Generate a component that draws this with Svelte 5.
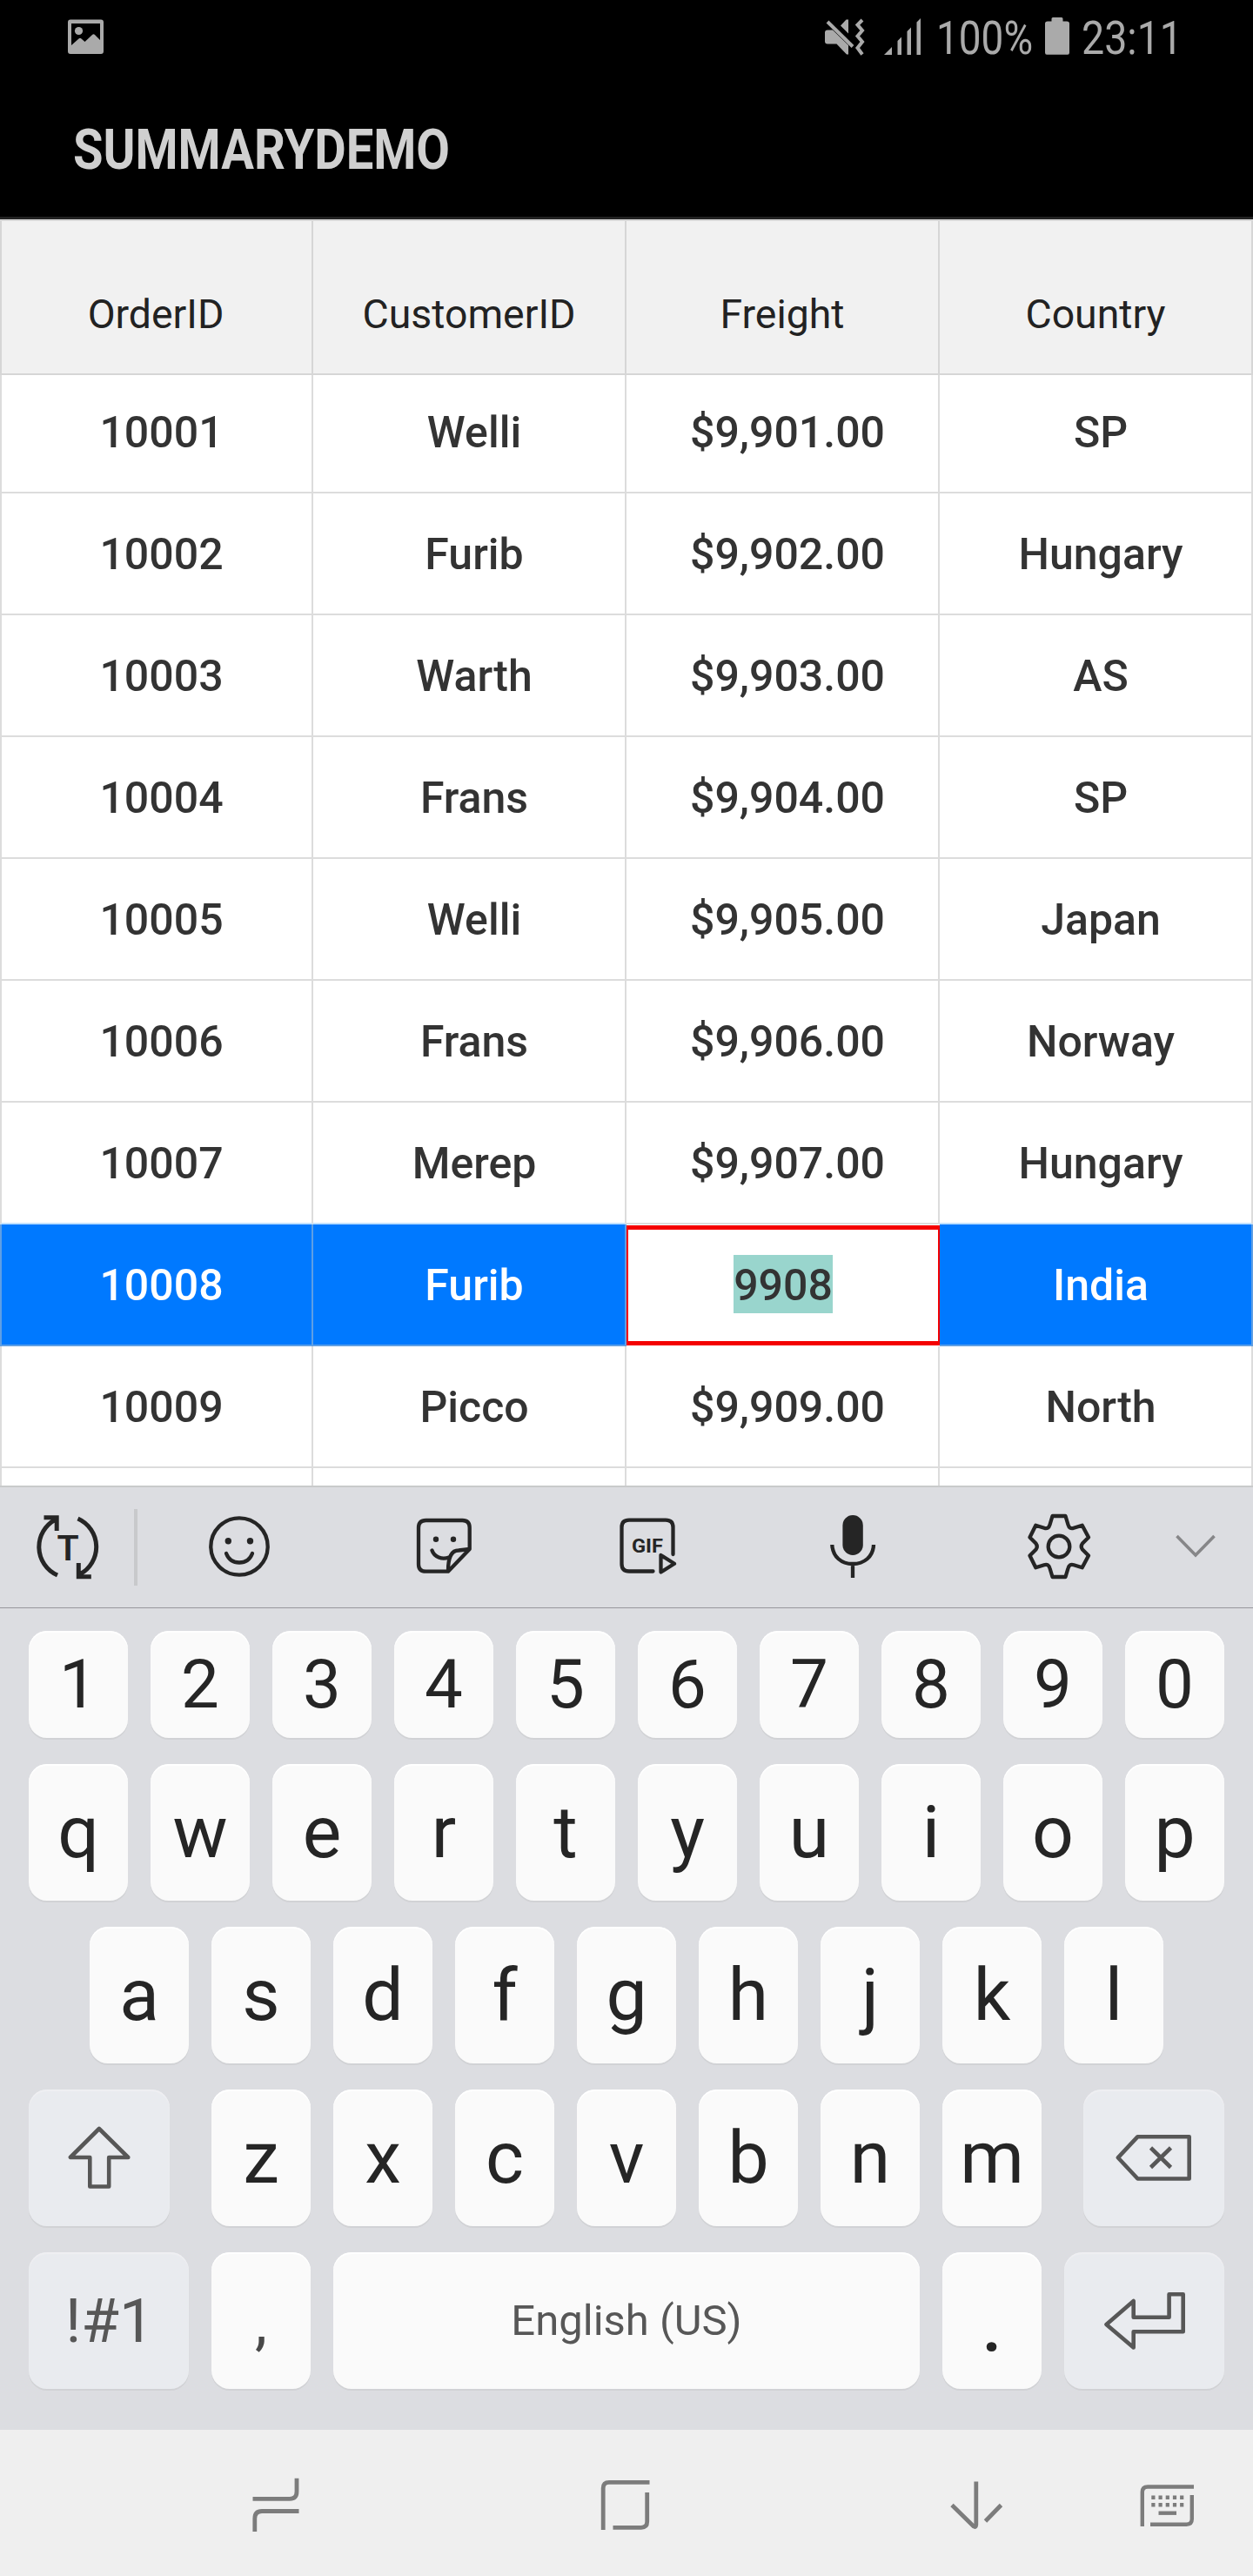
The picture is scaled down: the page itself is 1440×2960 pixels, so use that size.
<script>
  const columns = ['OrderID', 'CustomerID', 'Freight', 'Country'];
  const rows = [
    ['10001', 'Welli', '$9,901.00', 'SP'],
    ['10002', 'Furib', '$9,902.00', 'Hungary'],
    ['10003', 'Warth', '$9,903.00', 'AS'],
    ['10004', 'Frans', '$9,904.00', 'SP'],
    ['10005', 'Welli', '$9,905.00', 'Japan'],
    ['10006', 'Frans', '$9,906.00', 'Norway'],
    ['10007', 'Merep', '$9,907.00', 'Hungary'],
    ['10008', 'Furib', '9908', 'India'],
    ['10009', 'Picco', '$9,909.00', 'North'],
    ['', '', '', '']
  ];
  const selected = 7;
  const editing = 2;
</script>

<div class="screen">
  <div class="status">
    <svg class="photo" width="42" height="44" viewBox="78 20 42 44">
      <path fill-rule="evenodd" d="M81 22.500H116Q119 22.500 119 25.500V59Q119 62 116 62H81Q78 62 78 59V25.500Q78 22.500 81 22.500ZM82 27V52L90.500 44.500Q92 43 93.500 44.500L97.500 48L106 40Q107.500 38.500 109 40L115 46V27Z" />
      <ellipse cx="90.500" cy="35.500" rx="4.600" ry="4.600" />
    </svg>
    <svg width="45" height="44" viewBox="948 20 45 44">
      <path d="M951 34.500H957L975 52V62.500H973L961.500 50.500H951Q948 50.500 948 47.500V37.500Q948 34.500 951 34.500ZM975 22.500V38.500L966 29.500L972.500 22.500Z" />
      <path class="line" stroke-width="4" d="M951 25L980 53.500" />
      <path class="line" stroke-width="4" d="M991 23L985.500 28.500L991 35L985.500 41.500L991 48L985.500 55L991 62.500" />
    </svg>
    <svg class="signal" width="43" height="44" viewBox="1016 20 43 44">
      <path d="M1016 63L1025 54V63ZM1031.500 47L1036 42.500V63H1031.500ZM1042.500 36L1047 31.500V63H1042.500ZM1053.500 25.500L1058 21V63H1053.500Z" />
    </svg>
    <svg class="percent" width="112" height="64" viewBox="1076 10 112 64">
      <text x="1076" y="62" font-size="53" textLength="111" lengthAdjust="spacingAndGlyphs">100%</text>
    </svg>
    <svg class="battery" width="28" height="44" viewBox="1201 20 28 44">
      <path d="M1210 20H1220Q1221.500 20 1221.500 21.500V24.500H1226Q1229 24.500 1229 27V60.500Q1229 62.700 1227 62.700H1203Q1201 62.700 1201 60.500V27Q1201 24.500 1204 24.500H1208.500V21.500Q1208.500 20 1210 20Z" />
    </svg>
    <svg class="clock" width="118" height="64" viewBox="1243 10 118 64">
      <text x="1243" y="62" font-size="53" textLength="116" lengthAdjust="spacingAndGlyphs">23:11</text>
    </svg>
  </div>
  <div class="title">
    <svg width="440" height="84" viewBox="80 128 440 84">
      <text x="84" y="194" font-size="65" font-weight="700" textLength="433" lengthAdjust="spacingAndGlyphs">SUMMARYDEMO</text>
    </svg>
  </div>

  <div class="grid">
    <div class="row head">
      {#each columns as column}
        <div class="cell">{column}</div>
      {/each}
    </div>
    <div class="body">
      {#each rows as row, r}
        <div class="row" class:selected={r === selected} class:before={r === selected - 1}>
          {#each row as value, c}
            {#if r === selected && c === editing}
              <div class="cell edit"><span>{value}</span></div>
            {:else}
              <div class="cell">{value}</div>
            {/if}
          {/each}
        </div>
      {/each}
    </div>
  </div>

  <div class="keyboard">
    <div class="tools">
      <svg width="80" height="80" viewBox="37 1738 80 80">
        <path d="M66 1810A35.500 35.500 0 0 1 64 1746M50.500 1743.700H65.200V1759M89.500 1745A35.500 35.500 0 0 1 91.500 1809M104.800 1811.700H90.300V1796" stroke-width="5" />
        <text x="78" y="1793" font-size="41" font-weight="600" text-anchor="middle">T</text>
      </svg>
      <div class="divider"></div>
      <svg width="80" height="80" viewBox="235 1738 80 80">
        <circle cx="275" cy="1777" r="32.700" />
        <path stroke-linecap="round" d="M260 1785Q264 1795.500 275 1795.500T290 1785" />
        <circle class="solid" cx="262.300" cy="1770.700" r="3.700" />
        <circle class="solid" cx="287.500" cy="1770.700" r="3.700" />
      </svg>
      <svg width="80" height="80" viewBox="470 1738 80 80">
        <path stroke-linejoin="round" d="M515 1805.700H489.500Q481 1805.700 481 1797.500V1755.500Q481 1747 489.500 1747H531.500Q539.700 1747 539.700 1755.500V1780ZM515 1805C515 1790 518 1781.500 527 1781.500L539.700 1780" />
        <path stroke-linecap="round" d="M496.500 1781.500C499 1789 508 1792.500 516 1789.500" />
        <circle class="solid" cx="501" cy="1768.700" r="3.200" />
        <circle class="solid" cx="521" cy="1768.700" r="3.200" />
      </svg>
      <svg width="80" height="80" viewBox="705 1738 80 80">
        <path stroke-linecap="round" d="M750.500 1805.500H723Q714.500 1805.500 714.500 1797V1755Q714.500 1746.700 723 1746.700H765Q773.500 1746.700 773.500 1755V1786" />
        <path stroke-linejoin="round" d="M759.500 1787V1806.500L775 1796.800Z" />
        <text x="726" y="1784.300" font-size="22.500" font-weight="700" textLength="36" lengthAdjust="spacingAndGlyphs">GIF</text>
      </svg>
      <svg width="80" height="80" viewBox="940 1738 80 80">
        <rect class="solid" x="968.400" y="1741" width="23.400" height="46" rx="11.700" />
        <path d="M956.300 1775C957 1789 967 1797 980 1797S1003.500 1789 1004 1775M980 1797V1813" />
      </svg>
      <svg width="80" height="80" viewBox="1176 1738 80 80">
        <path stroke-linejoin="round" d="M1209.500 1742H1224.500L1227.500 1752Q1229 1757.500 1234 1755.800L1243.700 1752.700L1251 1766.500L1244 1773.500Q1241.500 1777 1244 1780.500L1251 1787.500L1243.700 1801.300L1234 1798.200Q1229 1796.500 1227.500 1802L1224.500 1812H1209.500L1206.500 1802Q1205 1796.500 1200 1798.200L1190.300 1801.300L1183.500 1787.500L1190.500 1780.500Q1193 1777 1190.500 1773.500L1183.500 1766.500L1190.300 1752.700L1200 1755.800Q1205 1757.500 1206.500 1752Z" />
        <circle cx="1217" cy="1777" r="12.300" />
      </svg>
      <svg class="chevron" width="80" height="80" viewBox="1335 1738 80 80">
        <path d="M1352.500 1765L1374 1787L1395.500 1765" />
      </svg>
    </div>

    <div class="keys">
      <div class="line-of digits">
        {#each '1234567890' as k}<div class="key">{k}</div>{/each}
      </div>
      <div class="line-of">
        {#each 'qwertyuiop' as k}<div class="key">{k}</div>{/each}
      </div>
      <div class="line-of">
        {#each 'asdfghjkl' as k}<div class="key">{k}</div>{/each}
      </div>
      <div class="line-of spread">
        <div class="key fn side">
          <svg width="80" height="80" viewBox="74 2440 80 80">
            <path d="M113.900 2446L80.800 2479H103.300V2512.500H125.200V2479H147.300Z" />
          </svg>
        </div>
        <div class="letters">
          {#each 'zxcvbnm' as k}<div class="key">{k}</div>{/each}
        </div>
        <div class="key fn side">
          <svg width="100" height="80" viewBox="1276 2440 100 80">
            <path d="M1307.500 2455.200H1366.700V2503.500H1307.500L1284.800 2479.300ZM1322.500 2468L1345.500 2490.500M1345.500 2468L1322.500 2490.500" />
          </svg>
        </div>
      </div>
      <div class="line-of">
        <div class="key fn wide">!#1</div>
        <div class="key comma">,</div>
        <div class="key space">English (US)</div>
        <div class="key period">.</div>
        <div class="key fn wide">
          <svg width="100" height="80" viewBox="1265 2627 100 80">
            <path d="M1270.500 2671L1301.700 2644V2662.700H1342.600V2636.300H1358.700V2679.300H1301.700V2697.500Z" />
          </svg>
        </div>
      </div>
    </div>
  </div>

  <div class="nav">
    <svg width="80" height="80" viewBox="277 2836 80 80">
      <path d="M290.500 2871.300H333Q341 2871.300 341 2863V2847.700M343.500 2885.500H301Q292.800 2885.500 292.800 2894V2909" />
    </svg>
    <svg width="80" height="80" viewBox="679 2836 80 80">
      <path d="M693.200 2907V2859Q693.200 2852.300 700 2852.300H746.500M743.700 2864V2897.500Q743.700 2904.300 737 2904.300H704.500" />
    </svg>
    <svg width="80" height="80" viewBox="1081 2836 80 80">
      <path stroke-linejoin="round" d="M1121.800 2851.500V2901Q1121.500 2904.500 1119 2903L1094 2878.500M1150.500 2878.500L1132.500 2897" />
    </svg>
    <svg class="ime" width="80" height="80" viewBox="1302 2836 80 80">
      <path d="M1312.800 2903V2863.500Q1312.800 2857.500 1319 2857.500H1372M1369.800 2867V2894.500Q1369.800 2900.700 1363.500 2900.700H1322" />
      <path stroke-dasharray="4.200 4" d="M1323.300 2869.700H1360.500M1323.300 2878.300H1360.500" />
      <path d="M1331.500 2887.700H1352" />
    </svg>
  </div>
</div>

<style>
  :global(body) {
    margin: 0;
  }
  .screen {
    display: flex;
    flex-direction: column;
    width: 1440px;
    height: 2960px;
    overflow: hidden;
    background: #fff;
    font-family: Roboto, 'Liberation Sans', sans-serif;
  }
  .screen * {
    box-sizing: border-box;
  }
  svg {
    display: block;
    flex: none;
    overflow: visible;
  }
  .status {
    display: flex;
    align-items: center;
    height: 84px;
    padding: 0 79px 0 78px;
    background: #000;
  }
  .status svg {
    fill: #aaa;
  }
  .status .line {
    fill: none;
    stroke: #aaa;
  }
  .photo {
    margin-right: auto;
  }
  .signal {
    margin-left: 23px;
  }
  .percent {
    margin-left: 17px;
  }
  .battery {
    margin-left: 13px;
  }
  .clock {
    margin-left: 14px;
  }
  .title {
    height: 168px;
    padding: 44px 80px 0;
    background: #000;
    border-bottom: 3px solid #222;
  }
  .title svg {
    fill: #d0d0d0;
  }

  .grid {
    height: 1455px;
    overflow: hidden;
  }
  .row {
    display: grid;
    grid-template-columns: repeat(4, 360px);
    height: 140px;
  }
  .cell {
    display: flex;
    align-items: center;
    justify-content: center;
    padding: 1px 0 0 12px;
    border-right: 2px solid #dcdcdc;
    border-bottom: 2px solid #dcdcdc;
    font-size: 50px;
    font-weight: 500;
    color: #333;
  }
  .cell:first-child {
    padding-left: 11px;
    border-left: 2px solid #dcdcdc;
  }
  .head {
    position: relative;
    height: 179px;
    background: #f1f1f1;
    border-top: 2px solid #d6d6d6;
  }
  .head .cell,
  .head .cell:first-child {
    padding: 38px 0 0;
    border-color: #d6d6d6;
    font-size: 46.400px;
    font-weight: 400;
    color: #222;
  }
  .head .cell:first-child {
    padding-right: 2px;
  }
  .body {
    margin-top: -4px;
  }
  .before .cell:not(:nth-child(3)) {
    border-bottom-color: #bfe0ff;
  }
  .selected .cell {
    background: #0079ff;
    border-color: #5f9fe4;
    color: #fff;
  }
  .selected .edit {
    padding: 0;
    background: #fff;
    border: solid #f40000;
    border-width: 5px 2px;
    margin: 1px 0;
    color: #333;
  }
  .edit span {
    height: 67px;
    margin-bottom: 4px;
    line-height: 70px;
    background: #99d5cd;
  }

  .keyboard {
    height: 1085px;
    background: #dcdde1;
    border-top: 2px solid #c9cacb;
  }
  .tools {
    display: grid;
    grid-template-columns: 154px 4px 234px 236px 234px 236px 236px 82px;
    align-items: center;
    justify-items: center;
    height: 139px;
    border-bottom: 1px solid #97979c;
  }
  .tools svg {
    fill: none;
    stroke: #252525;
    stroke-width: 4.300px;
  }
  .tools .solid,
  .tools text {
    fill: #252525;
    stroke: none;
  }
  .tools .chevron {
    stroke: #868688;
    stroke-width: 3.600px;
  }
  .divider {
    width: 4px;
    height: 88px;
    background: #c8c9cb;
  }
  .keys {
    display: flex;
    flex-direction: column;
    gap: 30px;
    padding: 26px 33px 0;
  }
  .line-of,
  .letters {
    display: flex;
    justify-content: center;
    gap: 26px;
    height: 157px;
  }
  .spread {
    justify-content: space-between;
  }
  .digits {
    height: 123px;
  }
  .key {
    display: flex;
    align-items: center;
    justify-content: center;
    width: 114px;
    border-radius: 21px;
    background: #fafafa;
    box-shadow: 0 2px 0 #d1d2d5, inset 0 2px 1px #fff;
    font-size: 84px;
    line-height: 1;
    color: #252525;
  }
  .digits .key {
    font-size: 78px;
  }
  .fn {
    background: #e9ebef;
    box-shadow: 0 2px 0 #d1d2d5, inset 0 2px 1px #efeff2;
    font-size: 71px;
    color: #575757;
  }
  .fn svg {
    fill: none;
    stroke: #575757;
    stroke-width: 4.600px;
    stroke-linejoin: round;
  }
  .side {
    width: 162px;
  }
  .wide {
    width: 184px;
    padding-left: 2px;
  }
  .space {
    width: 674px;
    font-size: 49px;
    color: #575757;
  }
  .comma {
    padding-top: 4px;
    font-size: 71px;
    color: #484848;
  }
  .period {
    padding-top: 14px;
    font-weight: 500;
  }

  .nav {
    display: flex;
    align-items: center;
    gap: 322px;
    height: 168px;
    padding-left: 277px;
    background: #efefef;
  }
  .nav svg {
    fill: none;
    stroke: #7c7c7c;
    stroke-width: 4.800px;
  }
  .nav .ime {
    margin-left: -181px;
    stroke-width: 4.400px;
  }
</style>
